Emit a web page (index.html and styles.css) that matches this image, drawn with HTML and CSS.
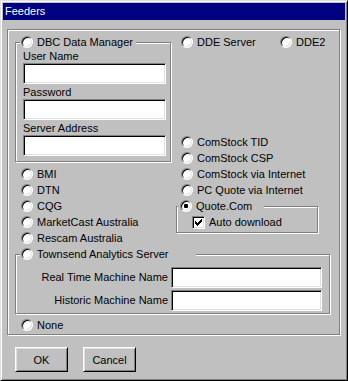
FILE: index.html
```html
<!DOCTYPE html>
<html lang="en">
<head>
  <meta charset="UTF-8" />
  <title>Feeders</title>
  <link rel="stylesheet" href="styles.css">
</head>
<body>

  <div class="window">
    <div class="titlebar">Feeders</div>

    <div class="frame">
      <div class="top">
        <div class="col-left">
          <fieldset class="group group-dbc">
            <legend><label class="opt"><span class="radio"></span>DBC Data Manager</label></legend>
            <div class="fields">
              <label class="field-label">User Name</label>
              <input class="edit" type="text">
              <label class="field-label">Password</label>
              <input class="edit" type="text">
              <label class="field-label">Server Address</label>
              <input class="edit" type="text">
            </div>
          </fieldset>

          <div class="opts opts-left">
            <label class="opt"><span class="radio"></span>BMI</label>
            <label class="opt"><span class="radio"></span>DTN</label>
            <label class="opt"><span class="radio"></span>CQG</label>
            <label class="opt"><span class="radio"></span>MarketCast Australia</label>
            <label class="opt"><span class="radio"></span>Rescam Australia</label>
          </div>
        </div>

        <div class="col-right">
          <div class="dde-row">
            <label class="opt opt-dde"><span class="radio"></span>DDE Server</label>
            <label class="opt"><span class="radio"></span>DDE2</label>
          </div>

          <div class="opts opts-right">
            <label class="opt"><span class="radio"></span>ComStock TID</label>
            <label class="opt"><span class="radio"></span>ComStock CSP</label>
            <label class="opt"><span class="radio"></span>ComStock via Internet</label>
            <label class="opt"><span class="radio"></span>PC Quote via Internet</label>
          </div>

          <fieldset class="group group-quote">
            <legend><label class="opt"><span class="radio on"></span>Quote.Com</label></legend>
            <label class="opt check-row">
              <span class="check">
                <svg width="7" height="7" viewBox="0 0 7 7" shape-rendering="crispEdges">
                  <path d="M6 0h1v1h-1z M5 1h2v1h-2z M0 2h1v1h-1z M4 2h3v1h-3z M0 3h2v1h-2z M3 3h3v1h-3z M0 4h5v1h-5z M1 5h3v1h-3z M2 6h1v1h-1z" fill="#000"/>
                </svg>
              </span>Auto download
            </label>
          </fieldset>
        </div>
      </div>

      <fieldset class="group group-townsend">
        <legend><label class="opt"><span class="radio"></span>Townsend Analytics Server</label></legend>
        <div class="machine-row">
          <span class="machine-label">Real Time Machine Name</span>
          <input class="edit edit-machine" type="text">
        </div>
        <div class="machine-row">
          <span class="machine-label">Historic Machine Name</span>
          <input class="edit edit-machine" type="text">
        </div>
      </fieldset>

      <label class="opt opt-none"><span class="radio"></span>None</label>
    </div>

    <div class="buttons">
      <button class="btn">OK</button>
      <button class="btn">Cancel</button>
    </div>
  </div>

</body>
</html>
```

FILE: styles.css
```css
* {
  margin: 0;
  padding: 0;
  box-sizing: border-box;
}

body {
  font-family: "Liberation Sans", Arial, sans-serif;
  font-size: 11px;
  color: #000;
  background: #c0c0c0;
}

.window {
  width: 348px;
  height: 381px;
  background: #c0c0c0;
  border: 1px solid;
  border-color: #dfdfdf #000 #000 #dfdfdf;
  box-shadow: inset 1px 1px #fff, inset -1px -1px #808080;
  padding: 2px;
}

.titlebar {
  height: 17px;
  line-height: 17px;
  padding-left: 2px;
  background: #000080;
  color: #fff;
}

/* etched frames */
.frame,
.group {
  border: 1px solid #808080;
  box-shadow: inset 1px 1px #fff, 1px 1px #fff;
}

.frame {
  width: 333px;
  margin: 9px 0 0 4px;
  padding: 4px 0 1px 7px;
}

.top {
  display: grid;
  grid-template-columns: 156px 142px;
  column-gap: 5px;
  align-items: start;
}

.group {
  min-width: 0;
}

.group legend {
  background: #c0c0c0;
  margin-left: 4px;
  padding-left: 1px;
}

.group-dbc legend {
  width: 116px;
}

.group-townsend legend {
  width: 176px;
}

.group-quote legend {
  width: 86px;
  margin-left: 1px;
  padding-left: 2px;
}

/* radio rows */
.opt {
  display: flex;
  align-items: center;
  gap: 4px;
  height: 16px;
  line-height: 13px;
  white-space: nowrap;
}

.radio {
  display: flex;
  align-items: center;
  justify-content: center;
  flex: none;
  width: 12px;
  height: 12px;
  border-radius: 50%;
  background: #fff;
  border: 1px solid;
  border-color: #808080 #fff #fff #808080;
  box-shadow: inset 1px 1px #000, inset -1px -1px #dfdfdf;
}

.radio.on::after {
  content: "";
  width: 4px;
  height: 4px;
  border-radius: 1px;
  background: #000;
}

.check {
  display: flex;
  align-items: center;
  justify-content: center;
  flex: none;
  width: 13px;
  height: 13px;
  background: #fff;
  border: 1px solid;
  border-color: #808080 #fff #fff #808080;
  box-shadow: inset 1px 1px #000, inset -1px -1px #dfdfdf;
}

.opts-left {
  margin-top: 4px;
  padding-left: 6px;
}

.dde-row {
  display: flex;
  padding-left: 5px;
}

.opt-dde {
  flex: none;
  width: 99px;
}

.opts-right {
  margin-top: 84px;
  padding-left: 5px;
}

.check-row {
  padding-left: 15px;
}

.group-quote {
  padding-bottom: 2px;
}

/* DBC fields */
.fields {
  padding: 0 4px 5px 7px;
}

.field-label {
  display: block;
  height: 13px;
  line-height: 13px;
}

.edit {
  display: block;
  width: 100%;
  height: 21px;
  padding: 0 2px;
  font: inherit;
  background: #fff;
  border: 1px solid;
  border-color: #808080 #fff #fff #808080;
  box-shadow: inset 1px 1px #000, inset -1px -1px #dfdfdf;
  outline: none;
}

.fields .edit {
  margin-bottom: 2px;
}

.fields .edit:last-child {
  margin-bottom: 0;
}

/* Townsend */
.group-townsend {
  width: 315px;
  padding: 5px 7px 2px 0;
}

.machine-row {
  display: flex;
  align-items: center;
  height: 21px;
}

.machine-row + .machine-row {
  margin-top: 2px;
}

.machine-label {
  flex: 1;
  text-align: right;
  padding-right: 3px;
  line-height: 13px;
}

.edit-machine {
  width: 151px;
  flex: none;
}

.opt-none {
  margin-top: 3px;
  padding-left: 6px;
}

/* buttons */
.buttons {
  display: flex;
  gap: 15px;
  margin: 12px 0 0 12px;
}

.btn {
  width: 53px;
  height: 25px;
  font: inherit;
  color: #000;
  background: #c0c0c0;
  border: 1px solid;
  border-color: #fff #000 #000 #fff;
  box-shadow: inset 1px 1px #dfdfdf, inset -1px -1px #808080;
}
```
